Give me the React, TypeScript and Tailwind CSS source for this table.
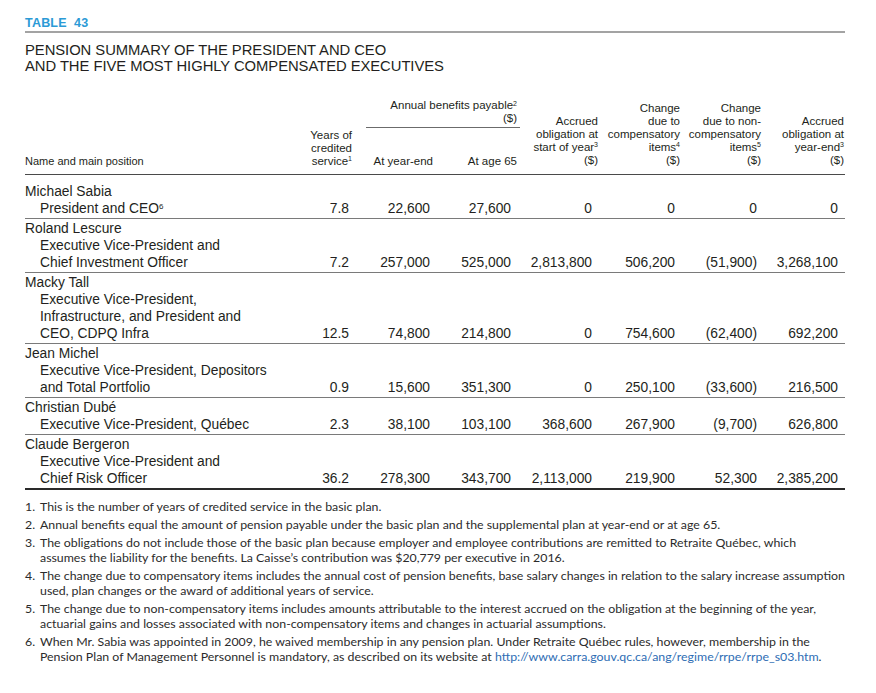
import React from "react";

const ink = "text-[#231f20]";

type Row = {
  name: string;
  lines: React.ReactNode[];
  values: string[];
};

const rows: Row[] = [
  {
    name: "Michael Sabia",
    lines: [
      <>
        President and CEO<sup className="text-[8px]">6</sup>
      </>,
    ],
    values: ["7.8", "22,600", "27,600", "0", "0", "0", "0"],
  },
  {
    name: "Roland Lescure",
    lines: ["Executive Vice-President and", "Chief Investment Officer"],
    values: ["7.2", "257,000", "525,000", "2,813,800", "506,200", "(51,900)", "3,268,100"],
  },
  {
    name: "Macky Tall",
    lines: ["Executive Vice-President,", "Infrastructure, and President and", "CEO, CDPQ Infra"],
    values: ["12.5", "74,800", "214,800", "0", "754,600", "(62,400)", "692,200"],
  },
  {
    name: "Jean Michel",
    lines: ["Executive Vice-President, Depositors", "and Total Portfolio"],
    values: ["0.9", "15,600", "351,300", "0", "250,100", "(33,600)", "216,500"],
  },
  {
    name: "Christian Dubé",
    lines: ["Executive Vice-President, Québec"],
    values: ["2.3", "38,100", "103,100", "368,600", "267,900", "(9,700)", "626,800"],
  },
  {
    name: "Claude Bergeron",
    lines: ["Executive Vice-President and", "Chief Risk Officer"],
    values: ["36.2", "278,300", "343,700", "2,113,000", "219,900", "52,300", "2,385,200"],
  },
];

// right padding of data cells, per numeric column
const dataPad = ["pr-[3px]", "pr-[3px]", "pr-[6px]", "pr-[6px]", "pr-[5px]", "pr-[4px]", "pr-[7px]"];

const notes: React.ReactNode[] = [
  <>This is the number of years of credited service in the basic plan.</>,
  <>Annual benefits equal the amount of pension payable under the basic plan and the supplemental plan at year-end or at age 65.</>,
  <>
    The obligations do not include those of the basic plan because employer and employee contributions are remitted to Retraite Québec, which
    <br />
    assumes the liability for the benefits. La Caisse’s contribution was $20,779 per executive in 2016.
  </>,
  <>
    The change due to compensatory items includes the annual cost of pension benefits, base salary changes in relation to the salary increase assumption
    <br />
    used, plan changes or the award of additional years of service.
  </>,
  <>
    The change due to non-compensatory items includes amounts attributable to the interest accrued on the obligation at the beginning of the year,
    <br />
    actuarial gains and losses associated with non-compensatory items and changes in actuarial assumptions.
  </>,
  <>
    When Mr. Sabia was appointed in 2009, he waived membership in any pension plan. Under Retraite Québec rules, however, membership in the
    <br />
    Pension Plan of Management Personnel is mandatory, as described on its website at{" "}
    <span className="text-[#2e6db4]">http://www.carra.gouv.qc.ca/ang/regime/rrpe/rrpe_s03.htm</span>.
  </>,
];

function Sup({ n }: { n: number }) {
  return <sup className="text-[7px]">{n}</sup>;
}

const rule = "border-b-[1.5px] border-[#4a4a4a] align-bottom font-normal";
const th = `${rule} text-right`;

export default function App() {
  return (
    <div className={`min-h-screen bg-white ${ink} px-[25px] pt-[16px] font-['Liberation_Sans',Arial,sans-serif]`}>
      <div className="w-[820px]">
        <div className="border-b-2 border-[#a3a3a3] pb-px">
          <div className="text-[12.5px] font-bold leading-[14px] tracking-[0.2px] text-[#2b9ad6]">
            TABLE&nbsp;&nbsp;43
          </div>
        </div>
        <div className="mt-[10px] text-[14.8px] leading-[15.5px] tracking-[-0.05px]">
          <div>PENSION SUMMARY OF THE PRESIDENT AND CEO</div>
          <div>AND THE FIVE MOST HIGHLY COMPENSATED EXECUTIVES</div>
        </div>

        <table className="mt-[25px] w-[820px] table-fixed border-collapse">
          <colgroup>
            <col className="w-[275px]" />
            <col className="w-[52px]" />
            <col className="w-[81px]" />
            <col className="w-[84px]" />
            <col className="w-[81px]" />
            <col className="w-[82px]" />
            <col className="w-[81px]" />
            <col className="w-[84px]" />
          </colgroup>
          <thead className="text-[11.5px] leading-[13px]">
            <tr>
              <th rowSpan={2} className={`${rule} pb-[6px] text-left text-[11px]`}>
                Name and main position
              </th>
              <th rowSpan={2} className={`${th} pb-[6px]`}>
                Years of
                <br />
                credited
                <br />
                service<Sup n={1} />
              </th>
              <th colSpan={2} className="p-0 align-bottom font-normal">
                <div className="ml-[14px] -mr-[3px] border-b border-[#6b6b6b] pb-[2px] pr-[3px] text-right">
                  Annual benefits payable<Sup n={2} />
                  <br />
                  ($)
                </div>
              </th>
              <th rowSpan={2} className={`${th} pb-[7px]`}>
                Accrued
                <br />
                obligation at
                <br />
                start of year<Sup n={3} />
                <br />
                ($)
              </th>
              <th rowSpan={2} className={`${th} pb-[7px]`}>
                Change
                <br />
                due to
                <br />
                compensatory
                <br />
                items<Sup n={4} />
                <br />
                ($)
              </th>
              <th rowSpan={2} className={`${th} pb-[7px]`}>
                Change
                <br />
                due to non-
                <br />
                compensatory
                <br />
                items<Sup n={5} />
                <br />
                ($)
              </th>
              <th rowSpan={2} className={`${th} pb-[7px] pr-[1px]`}>
                Accrued
                <br />
                obligation at
                <br />
                year-end<Sup n={3} />
                <br />
                ($)
              </th>
            </tr>
            <tr>
              <th className={`${th} h-[46px] pb-[6px]`}>At year-end</th>
              <th className={`${th} h-[46px] pb-[6px]`}>At age 65</th>
            </tr>
          </thead>
          <tbody className="text-[13.8px] leading-[17px]">
            {rows.map((r, i) => {
              const last = i === rows.length - 1;
              const border = last ? "border-b-2 border-[#2a2a2a]" : "border-b border-[#7a7a7a]";
              const pt = i === 0 ? "pt-[8px]" : "pt-px";
              return (
                <tr key={r.name}>
                  <td className={`${border} ${pt} pb-px align-bottom whitespace-nowrap`}>
                    <div>{r.name}</div>
                    {r.lines.map((l, j) => (
                      <div key={j} className="pl-[15px]">
                        {l}
                      </div>
                    ))}
                  </td>
                  {r.values.map((v, j) => (
                    <td key={j} className={`${border} ${pt} pb-px ${dataPad[j]} text-right align-bottom whitespace-nowrap`}>
                      {v}
                    </td>
                  ))}
                </tr>
              );
            })}
          </tbody>
        </table>

        <ol className="mt-[9px] font-['Lato',sans-serif] text-[12.35px] leading-[15px] text-[#2b2b2b]">
          {notes.map((n, i) => (
            <li key={i} className="mb-[3px] flex">
              <span className="w-[15px] shrink-0">{i + 1}.</span>
              <span className="whitespace-nowrap">{n}</span>
            </li>
          ))}
        </ol>
      </div>
    </div>
  );
}
